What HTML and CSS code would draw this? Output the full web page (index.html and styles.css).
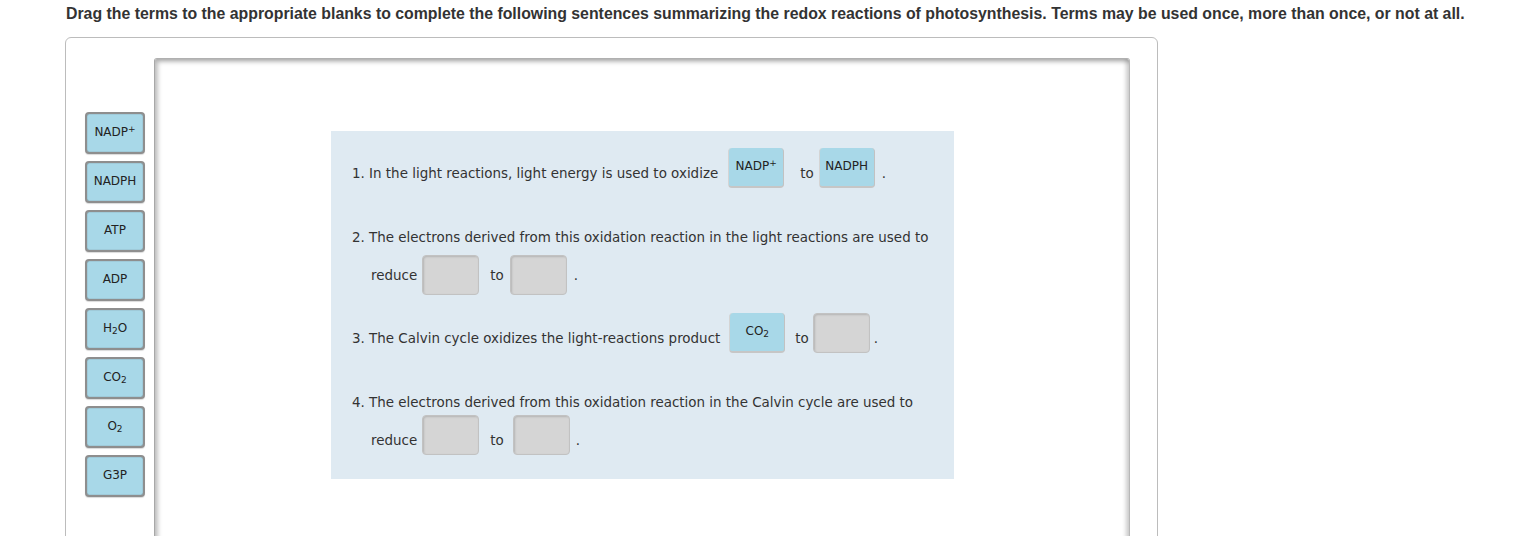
FILE: index.html
```html
<!DOCTYPE html>
<html>

<head>
    <title>Redox reactions of photosynthesis</title>
    <link rel="stylesheet" href="styles.css">
</head>

<body>
    <p class="prompt">Drag the terms to the appropriate blanks to complete the following sentences summarizing the redox reactions of photosynthesis. Terms may be used once, more than once, or not at all.</p>

    <div class="frame">
        <!-- term bank -->
        <div class="terms">
            <div class="term"><span>NADP<sup>+</sup></span></div>
            <div class="term"><span>NADPH</span></div>
            <div class="term"><span>ATP</span></div>
            <div class="term"><span>ADP</span></div>
            <div class="term"><span>H<sub>2</sub>O</span></div>
            <div class="term"><span>CO<sub>2</sub></span></div>
            <div class="term"><span>O<sub>2</sub></span></div>
            <div class="term"><span>G3P</span></div>
        </div>

        <div class="canvas">
            <div class="panel">
                <div class="row row1">
                    <span class="txt low">1. In the light reactions, light energy is used to oxidize</span>
                    <span class="slot filled s0"><span>NADP<sup>+</sup></span></span>
                    <span class="txt low to1">to</span>
                    <span class="slot filled s2"><span>NADPH</span></span>
                    <span class="txt low dot">.</span>
                </div>

                <div class="line line2">2. The electrons derived from this oxidation reaction in the light reactions are used to</div>

                <div class="row row3">
                    <span class="txt indent">reduce</span>
                    <span class="slot empty s1"></span>
                    <span class="txt to2">to</span>
                    <span class="slot empty s3"></span>
                    <span class="txt dot">.</span>
                </div>

                <div class="row row4">
                    <span class="txt low">3. The Calvin cycle oxidizes the light-reactions product</span>
                    <span class="slot filled s4"><span>CO<sub>2</sub></span></span>
                    <span class="txt low to3">to</span>
                    <span class="slot empty s5"></span>
                    <span class="txt low dot2">.</span>
                </div>

                <div class="line line5">4. The electrons derived from this oxidation reaction in the Calvin cycle are used to</div>

                <div class="row row6">
                    <span class="txt low indent">reduce</span>
                    <span class="slot empty s1"></span>
                    <span class="txt low to2">to</span>
                    <span class="slot empty s6"></span>
                    <span class="txt low dot3">.</span>
                </div>
            </div>
        </div>
    </div>
</body>

</html>
```

FILE: styles.css
```css
body {
    margin: 0;
    padding: 6px 0 0 65px;
    background-color: #fff;
    font-family: "DejaVu Sans", Verdana, sans-serif;
    color: #333;
    overflow: hidden;
}

.prompt {
    margin: 0 0 15px 1px;
    font-family: "Liberation Sans", Arial, sans-serif;
    font-weight: bold;
    font-size: 15.85px;
    line-height: 16px;
    color: #333;
    white-space: nowrap;
}

/* outer question frame */
.frame {
    width: 1091px;
    height: 560px;
    border: 1px solid #bcbcbc;
    border-radius: 6px;
    padding-top: 20px;
    display: flex;
}

.terms {
    width: 60px;
    margin-left: 19px;
    padding-top: 54px;
    display: flex;
    flex-direction: column;
    gap: 7px;
}

.term {
    height: 36px;
    display: flex;
    align-items: center;
    justify-content: center;
    padding-bottom: 2px;
    box-sizing: content-box;
    background-color: #a8d8e8;
    border: 2px solid #8e8e8e;
    border-radius: 4px;
    box-shadow: inset 0 0 1px #555, 0 1px 1px rgba(0, 0, 0, 0.15);
    font-size: 12px;
    line-height: 14px;
    color: #222;
}

.term sup,
.slot sup {
    font-size: 9px;
    line-height: 0;
    vertical-align: 4px;
}

.term sub,
.slot sub {
    font-size: 9px;
    line-height: 0;
    vertical-align: -2px;
}

/* drop area */
.canvas {
    width: 976px;
    height: 540px;
    margin-left: 9px;
    border-left: 1px solid #a8a8a8;
    border-top: 1px solid #b0b0b0;
    border-right: 1px solid #b8b8b8;
    box-shadow: inset 3px 3px 4px rgba(0, 0, 0, 0.25), inset -3px 0 4px rgba(0, 0, 0, 0.2);
    border-radius: 3px 3px 0 0;
    padding: 72px 0 0 176px;
    box-sizing: border-box;
}

.panel {
    width: 623px;
    height: 348px;
    background-color: #dfeaf2;
    padding: 17px 0 0 21px;
    box-sizing: border-box;
    font-size: 13.45px;
}

.row {
    display: flex;
    align-items: center;
    height: 40px;
}

.txt {
    line-height: 16px;
}

.low {
    padding-top: 11px;
}

.line {
    line-height: 16px;
}

.line2 {
    margin-top: 42px;
}

.row3 {
    margin-top: 9px;
}

.row4 {
    margin-top: 18px;
}

.line5 {
    margin-top: 42px;
}

.row6 {
    margin-top: 4px;
}

.row3 .txt {
    padding-top: 1px;
}

.indent {
    margin-left: 19px;
}

.slot {
    width: 56px;
    height: 40px;
    box-sizing: border-box;
    border-radius: 4px;
    display: flex;
    justify-content: center;
    font-size: 12px;
    line-height: 14px;
    color: #222;
}

.filled {
    background-color: #a8d8e8;
    border-right: 1px solid #c2c2c2;
    border-bottom: 2px solid #c6c6c6;
    border-left: 1px solid #d4d4d4;
    padding-top: 11px;
}

.empty {
    background-color: #d5d5d5;
    border: 1px solid #c2c2c2;
    box-shadow: inset 1px 1px 2px rgba(0, 0, 0, 0.15);
    width: 57px;
}

.s0 { margin-left: 10px; }
.s1 { margin-left: 5px; }
.s2 { margin-left: 5px; }
.s3 { margin-left: 6px; }
.s4 { margin-left: 9px; }
.s5 { margin-left: 4px; }
.s6 { margin-left: 9px; }

.to1 { margin-left: 16px; }
.to2 { margin-left: 11px; }
.to3 { margin-left: 10px; }

.dot { margin-left: 7px; }
.dot2 { margin-left: 4px; }
.dot3 { margin-left: 6px; }
```
